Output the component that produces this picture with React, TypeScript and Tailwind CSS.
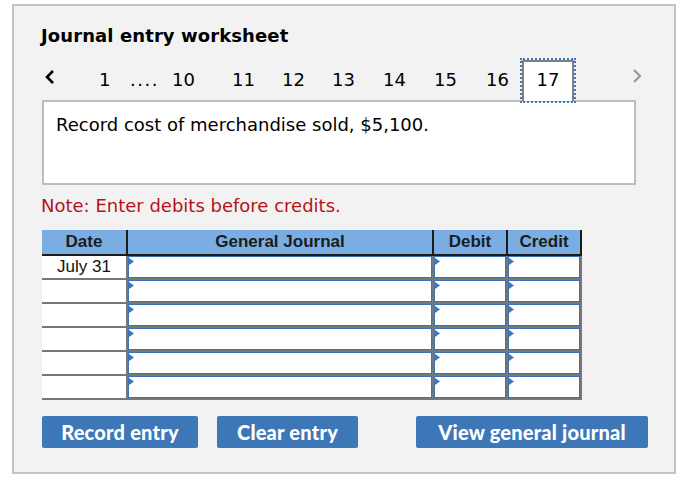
import React from "react";

const verdana = { fontFamily: '"DejaVu Sans", Verdana, sans-serif' };

function Tri() {
  return (
    <svg className="absolute left-0 top-[1px]" width="5" height="7" viewBox="0 0 5 7">
      <polygon points="0,0 5,3.5 0,7" fill="#3b78c4" />
    </svg>
  );
}

function InputCell({ w }: { w: string }) {
  return (
    <div className={`${w} h-[22px] relative bg-white border border-[#3b73b9]`}>
      <Tri />
    </div>
  );
}

export default function App() {
  const rows = ["July 31", "", "", "", "", ""];
  return (
    <div className="w-[688px] h-[482px] bg-white pt-[4px] pl-[12px]">
      <div
        className="w-[664px] h-[470px] border-2 border-[#c4c4c4] bg-[#f2f2f2] pl-[28px] text-black"
        style={verdana}
      >
        <div className="mt-[20px] text-[18px] leading-[20px] font-bold -ml-[1px] tracking-[0.1px]">Journal entry worksheet</div>

        <div className="mt-[14px] h-[40px] text-[18px] leading-[20px] relative">
          <svg className="absolute left-[2px] top-[9px]" width="12" height="16" viewBox="0 0 12 16">
            <polyline points="9,2 3,8 9,14" fill="none" stroke="#000" strokeWidth="2.6" />
          </svg>
          <span className="absolute left-[57px] top-[10px]">1</span>
          <span className="absolute left-[88px] top-[10px] tracking-[1.5px]">....</span>
          <span className="absolute left-[130px] top-[10px]">10</span>
          <span className="absolute left-[190px] top-[10px]">11</span>
          <span className="absolute left-[240px] top-[10px]">12</span>
          <span className="absolute left-[290px] top-[10px]">13</span>
          <span className="absolute left-[341px] top-[10px]">14</span>
          <span className="absolute left-[392px] top-[10px]">15</span>
          <span className="absolute left-[444px] top-[10px]">16</span>
          <div className="absolute left-[480px] top-0 w-[52px] h-[41px] bg-white border-2 border-b-0 border-[#808080] outline-2 outline-dotted outline-[#3c78c0] z-10 pt-[8px] text-center">
            17
          </div>
          <svg className="absolute left-[589px] top-[8px]" width="12" height="16" viewBox="0 0 12 16">
            <polyline points="3,2 9,8 3,14" fill="none" stroke="#9a9a9a" strokeWidth="2.2" />
          </svg>
        </div>

        <div className="w-[594px] h-[85px] bg-white border-2 border-[#bdbdbd] pl-[12px] pt-[13px] text-[18px] leading-[20px]">
          Record cost of merchandise sold, $5,100.
        </div>

        <div className="mt-[11px] text-[18px] leading-[20px] text-[#b5121b] -ml-[1px]">Note: Enter debits before credits.</div>

        <div
          className="mt-[14px] w-[540px]"
          style={{ fontFamily: '"Liberation Sans", Arial, sans-serif' }}
        >
          <div className="flex h-[26px] bg-[#7aaee2] border-b-2 border-[#1a1a1a] text-[17px] font-bold text-[#1c1c1c] leading-[24px]">
            <div className="w-[84px] text-center">Date</div>
            <div className="w-[2px] bg-[#1a1a1a]" />
            <div className="w-[304px] text-center">General Journal</div>
            <div className="w-[2px] bg-[#1a1a1a]" />
            <div className="w-[72px] text-center">Debit</div>
            <div className="w-[2px] bg-[#1a1a1a]" />
            <div className="w-[72px] text-center">Credit</div>
            <div className="w-[2px] bg-[#1a1a1a]" />
          </div>
          {rows.map((d, i) => (
            <div key={i} className="flex h-[24px] border-b-2 border-[#777777] bg-[#777777]">
              <div className="w-[84px] h-[22px] bg-white text-center text-[17px] leading-[22px] text-[#111]">
                {d}
              </div>
              <div className="w-[2px]" />
              <InputCell w="w-[304px]" />
              <div className="w-[2px]" />
              <InputCell w="w-[72px]" />
              <div className="w-[2px]" />
              <InputCell w="w-[72px]" />
              <div className="w-[2px]" />
            </div>
          ))}
        </div>

        <div
          className="mt-[16px] flex text-white font-black text-[20px] tracking-[0.2px]"
          style={{ fontFamily: 'Lato, "Open Sans", sans-serif' }}
        >
          <button className="w-[156px] h-[32px] bg-[#3d77b8] rounded-[2px] leading-[32px]">Record entry</button>
          <button className="ml-[19px] w-[141px] h-[32px] bg-[#3d77b8] rounded-[2px] leading-[32px]">Clear entry</button>
          <button className="ml-[58px] w-[232px] h-[32px] bg-[#3d77b8] rounded-[2px] leading-[32px]">View general journal</button>
        </div>
      </div>
    </div>
  );
}
